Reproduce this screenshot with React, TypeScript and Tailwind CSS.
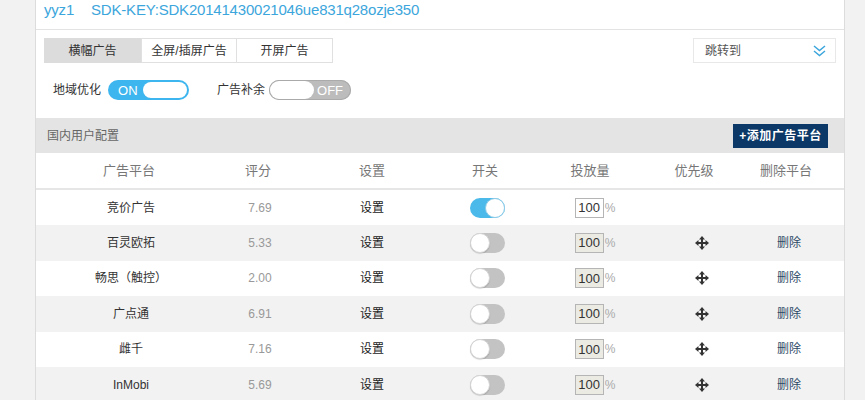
import React from "react";

const rows = [
  { name: "竞价广告", score: "7.69", on: true, first: true },
  { name: "百灵欧拓", score: "5.33" },
  { name: "畅思（触控）", score: "2.00" },
  { name: "广点通", score: "6.91" },
  { name: "雌千", score: "7.16" },
  { name: "InMobi", score: "5.69" },
];

const cols = "grid grid-cols-[186px_72px_156px_70px_140px_68px_116px]";

function MoveIcon() {
  return (
    <svg width="14" height="14" viewBox="0 0 14 14" fill="#333">
      <rect x="6" y="2" width="2" height="10" />
      <rect x="2" y="6" width="10" height="2" />
      <polygon points="7,0 10,3.5 4,3.5" />
      <polygon points="7,14 10,10.5 4,10.5" />
      <polygon points="0,7 3.5,4 3.5,10" />
      <polygon points="14,7 10.5,4 10.5,10" />
    </svg>
  );
}

function Chevrons() {
  return (
    <svg width="13" height="12" viewBox="0 0 13 12" fill="none" stroke="#3ca6dc" strokeWidth="1.5">
      <polyline points="1,1 6.5,5.5 12,1" />
      <polyline points="1,6 6.5,10.5 12,6" />
    </svg>
  );
}

function BigSwitch({ on }: { on: boolean }) {
  return on ? (
    <div className="flex h-5 w-[81px] items-center rounded-full bg-[#3db5ee] pl-[10px] pr-[2px]">
      <span className="text-[13px] leading-none text-white">ON</span>
      <span className="ml-auto h-4 w-[44px] rounded-full bg-white" />
    </div>
  ) : (
    <div className="flex h-5 w-[82px] items-center rounded-full bg-[#bcbcbc] pl-[1px] pr-[8px] shadow-[inset_0_0_0_1px_#aaa]">
      <span className="h-[18px] w-[44px] rounded-full bg-white" />
      <span className="ml-auto text-[13px] leading-none text-white">OFF</span>
    </div>
  );
}

function SmallSwitch({ on }: { on: boolean }) {
  return on ? (
    <div className="flex h-5 w-[35px] items-center justify-end rounded-full bg-[#4bb9ea]">
      <span className="h-5 w-5 rounded-full border border-[#8fcbe6] bg-white" />
    </div>
  ) : (
    <div className="flex h-5 w-[35px] items-center rounded-full bg-[#c3c3c3]">
      <span className="h-5 w-5 rounded-full border border-[#d5d5d5] bg-white shadow-[0_1px_1px_rgba(0,0,0,0.15)]" />
    </div>
  );
}

export default function App() {
  return (
    <div
      className="flex h-[400px] w-[865px] overflow-hidden bg-[#f2f2f2]"
      style={{ fontFamily: '"Liberation Sans", "Noto Sans CJK SC", sans-serif' }}
    >
      <div className="w-[36px] border-r border-[#dcdcdc]" />
      <div className="w-[809px] border-r border-[#dcdcdc] bg-white">
        <div className="flex h-[30px] items-start border-b border-[#e3e3e3] pl-[8px] text-[15px] leading-[20px] tracking-[-0.2px] text-[#3ca6dc]">
          <span>yyz1</span>
          <span className="ml-[17px]">SDK-KEY:SDK20141430021046ue831q28ozje350</span>
        </div>

        <div className="mt-[8px] flex items-center pl-[8px] pr-[8px]">
          <div className="flex h-[25px] text-[12px] text-[#333]">
            <div className="flex w-[97px] items-center justify-center bg-[#dcdcdc]">横幅广告</div>
            <div className="flex w-[96px] items-center justify-center border border-[#e0e0e0]">全屏/插屏广告</div>
            <div className="flex w-[96px] items-center justify-center border border-l-0 border-[#e0e0e0]">开屏广告</div>
          </div>
          <div className="ml-auto flex h-[25px] w-[143px] items-center border border-[#e8e8e8] pl-[11px] pr-[9px] text-[12px] text-[#555]">
            <span>跳转到</span>
            <span className="ml-auto"><Chevrons /></span>
          </div>
        </div>

        <div className="mt-[17px] flex items-center pl-[17px] text-[12px] text-[#333]">
          <span>地域优化</span>
          <span className="ml-[7px]"><BigSwitch on /></span>
          <span className="ml-[28px]">广告补余</span>
          <span className="ml-[4px]"><BigSwitch on={false} /></span>
        </div>

        <div className="mt-[18px] flex h-[35px] items-center bg-[#e4e4e4] pl-[11px] pr-[16px]">
          <span className="text-[12px] text-[#666]">国内用户配置</span>
          <button className="ml-auto flex h-[24px] w-[95px] items-center justify-center bg-[#0b3866] text-[12px] font-bold tracking-[0.5px] text-white">
            +添加广告平台
          </button>
        </div>

        <div className={`${cols} h-[37px] items-center border-b-2 border-[#e6e6e6] text-center text-[13px] text-[#777]`}>
          <span>广告平台</span>
          <span>评分</span>
          <span>设置</span>
          <span>开关</span>
          <span>投放量</span>
          <span>优先级</span>
          <span>删除平台</span>
        </div>

        {rows.map((r, i) => (
          <div
            key={r.name}
            className={`${cols} h-[35.4px] items-center text-center text-[12px] ${i % 2 ? "bg-[#f2f2f2]" : "bg-white"}`}
          >
            <span className="pl-[4px] text-[#333]">{r.name}</span>
            <span className="pl-[4px] text-[#999]">{r.score}</span>
            <span className="text-[#222]">设置</span>
            <span className="flex justify-center pl-[4px]">
              <SmallSwitch on={!!r.on} />
            </span>
            <span className="flex items-center justify-center pl-[10px]">
              <span
                className={`flex h-[20px] w-[29px] items-center justify-center border border-[#b5b5b5] text-[13px] text-[#333] ${r.first ? "bg-white" : "bg-[#ebebe4]"}`}
              >
                100
              </span>
              <span className="ml-[1px] text-[12px] text-[#aaa]">%</span>
            </span>
            <span className="flex justify-center pl-[16px]">{r.first ? null : <MoveIcon />}</span>
            <span className="pl-[6px] text-[#2d4a66]">{r.first ? "" : "删除"}</span>
          </div>
        ))}
      </div>
    </div>
  );
}
